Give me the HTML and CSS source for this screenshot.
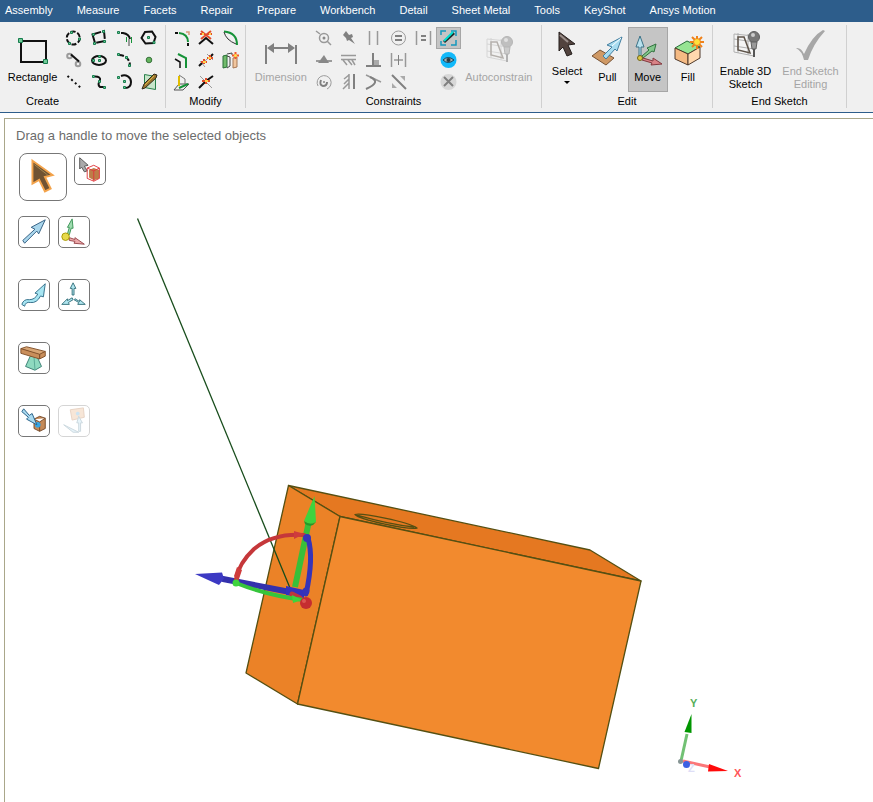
FILE: index.html
```html
<!DOCTYPE html>
<html lang="en">
<head>
<meta charset="utf-8">
<title>Sketch and Move</title>
<link rel="stylesheet" href="styles.css">
</head>
<body>
<nav class="tabs">
  <a href="#">Assembly</a><a href="#">Measure</a><a href="#">Facets</a><a href="#">Repair</a><a href="#">Prepare</a><a href="#">Workbench</a><a href="#">Detail</a><a href="#">Sheet Metal</a><a href="#">Tools</a><a href="#">KeyShot</a><a href="#">Ansys Motion</a>
</nav>
<header class="ribbon">
  <section class="group create">
    <div class="tools">
      <button class="big wide"><svg width="36" height="32" viewBox="0 0 36 32"><path class="k" d="M6 7h25v21H6z"/><path class="n" d="M3.500 4.500h4v4h-4zM28.500 25.500h4v4h-4z"/></svg>Rectangle</button>
      <div class="grid four">
        <button aria-label="Circle"><svg viewBox="0 0 25 22"><circle class="k" cx="12.300" cy="11" r="6.500" stroke-dasharray="5 1.800"/><path class="n" d="M9.500 4.500h2v2h-2zM17.500 11h2v2h-2zM7.500 15.500h2v2h-2z"/></svg></button>
        <button aria-label="Three-point rectangle"><svg viewBox="0 0 25 22"><path class="k" d="M6.500 7.500L18 4l1 10-10 2z" stroke-dasharray="9 2"/><path class="n" d="M6.500 6.500h2v2h-2zM16.500 3.500h2v2h-2zM7.500 15.500h2v2h-2zM17.500 13.500h2v2h-2z"/></svg></button>
        <button aria-label="Tangent arc"><svg viewBox="0 0 25 22"><path class="k" d="M10 6h2q6 1 7 6"/><path class="s thick" d="M18 12v7"/><path class="g" d="M15.500 10v5M20.500 10v6"/><path class="n" d="M6.500 4.500h2v2h-2z"/></svg></button>
        <button aria-label="Polygon"><svg viewBox="0 0 25 22"><path class="k" d="M9 5l7-.5L19.500 10l-2 6-8 .500L5.500 11z"/><path class="n" d="M11.500 9.500h2v2h-2zM17 14.500h2v2h-2z"/></svg></button>
        <button aria-label="Tangent line"><svg viewBox="0 0 25 22"><circle class="s thick" cx="8.500" cy="7" r="2.300"/><circle class="s thick" cx="17" cy="15" r="2.300"/><path class="k" d="M10 5.500l8 7"/></svg></button>
        <button aria-label="Ellipse"><svg viewBox="0 0 25 22"><ellipse class="k" cx="13" cy="11.500" rx="7" ry="4.500"/><path class="n" d="M6.500 10.500h2v2h-2zM12.500 10.500h2v2h-2zM12.500 6.500h2v2h-2z"/></svg></button>
        <button aria-label="Three-point arc"><svg viewBox="0 0 25 22"><path class="k" d="M8 6c6 0 11 4 11 11" stroke-dasharray="5 2"/><path class="n" d="M6.500 4.500h2v2h-2zM14.500 7.500h2v2h-2zM17.500 15.500h2v2h-2z"/></svg></button>
        <button aria-label="Point"><svg viewBox="0 0 25 22"><circle cx="13" cy="11" r="2.800" fill="#64b45d" stroke="#39723d"/></svg></button>
        <button aria-label="Construction line"><svg viewBox="0 0 25 22"><path class="k" d="M6.500 5l14 12.500" stroke-dasharray="2 3"/></svg></button>
        <button aria-label="Spline"><svg viewBox="0 0 25 22"><path class="k" d="M9 5.500q6 0 5 4-3 4 0 6.500h4"/><path class="n" d="M6.500 4.500h2v2h-2zM12.500 9.500h2v2h-2zM17.500 15.500h2v2h-2z"/></svg></button>
        <button aria-label="Sweep arc"><svg viewBox="0 0 25 22"><path class="k" d="M10 5c5-2 10 1 10 6 0 4-2 6-6 6"/><path class="n" d="M6.500 5.500h2v2h-2zM12.500 9.500h2v2h-2zM12.500 15.500h2v2h-2z"/></svg></button>
        <button aria-label="Face curve"><svg viewBox="0 0 25 22"><path d="M8.500 3.500l11 2v13l-11-2z" fill="#c7e5ca" stroke="#28804a"/><path d="M6 18l2-5L18 3l3 1-1 3L9 17z" fill="#9b762e" stroke="#332a1d"/><path d="M9 14l9-9" stroke="#d8b848"/></svg></button>
      </div>
    </div>
    <h2>Create</h2>
  </section>
  <section class="group modify">
    <div class="tools">
      <div class="grid three">
        <button aria-label="Rounded corner"><svg viewBox="0 0 24 22"><path class="k" d="M5 6h3M18 16v3"/><path class="g thick" d="M9 6q9 1 9 9"/><path d="M16 5h3v3" stroke="#d99a7b" fill="none" stroke-width="1.500"/></svg></button>
        <button aria-label="Trim away"><svg viewBox="0 0 24 22"><path class="k" d="M5 17l7-6 7 6"/><path class="r" d="M7 4l10 8M17 4L7 12M6 7h5M13 7h5"/><path class="y" d="M8 7h2M15 7h2"/></svg></button>
        <button aria-label="Offset curve"><svg viewBox="0 0 24 22"><path class="g thick" d="M6 4.500q13 1 13 13.500"/><path d="M6 5q2 8 12 12" stroke="#333" fill="none"/></svg></button>
        <button aria-label="Offset line"><svg viewBox="0 0 24 22"><path d="M5 10l5 3v6" stroke="#111" fill="none" stroke-width="1.500"/><path class="g thick" d="M8 5l8 4v10"/></svg></button>
        <button aria-label="Split curve"><svg viewBox="0 0 24 22"><path class="s" d="M5 17L19 5M6 12l5 6M13 5l6 6"/><path class="k" d="M5 17l3-3M16 8l3-3"/><path class="r" d="M7 13h6M10 10v5M13 9h6M16 6v5"/><path class="y" d="M9 13h3M14 9h3"/></svg></button>
        <button aria-label="Project to sketch"><svg viewBox="0 0 24 22"><path d="M5 7l4-1v12l-4 1z" fill="#72bb6c" stroke="#286e36"/><path d="M9 5l5-1v2M12 8v9l-3 2M9 7l3 1" fill="none" stroke="#444"/><path d="M15 9l4-1v10l-4 1z" fill="#f2c69e" stroke="#a67857"/><path d="M17.500 3v7M14 6.500h7" stroke="#f4572a" stroke-width="2"/><circle cx="17.500" cy="6.500" r="1.500" fill="#ffe54c"/></svg></button>
        <button aria-label="Project edge"><svg viewBox="0 0 24 22"><path d="M9 13l10 0-6 6H4z" fill="#eee" stroke="#555"/><path class="g thick" d="M9 17l9-4"/><path d="M9 5v10" fill="none" stroke="#e1bd00" stroke-width="2"/><path d="M9 4l6 4v5" fill="none" stroke="#777"/></svg></button>
        <button aria-label="Create corner"><svg viewBox="0 0 24 22"><path class="s" d="M6 5l12 12" stroke-width="2"/><path class="k" d="M5 17l7-7 7-5"/><path class="r" d="M8 10h8M12 7v6"/><path class="y" d="M11 10h3"/></svg></button>
      </div>
    </div>
    <h2>Modify</h2>
  </section>
  <section class="group constraints">
    <div class="tools">
      <button class="big wide off" disabled><svg width="36" height="32" viewBox="0 0 36 32"><path class="d thick" d="M3 11v19M33 11v19M8 14h20"/><path fill="#808080" d="M4 14l7-5v10zM32 14l-7-5v10z"/></svg>Dimension</button>
      <div class="grid six">
        <button aria-label="Coincident"><svg viewBox="0 0 25 22"><circle class="m" cx="13" cy="11" r="4.500"/><path class="m" d="M5 4l4 3M16 14l4 4"/><circle cx="13" cy="11" r="1.500" fill="#888"/></svg></button>
        <button aria-label="Fix"><svg viewBox="0 0 25 22"><path d="M7 8l3-4 3 4 3-1 1 3-2 1 4 6-6-4-2 1-1-3z" fill="#808080"/></svg></button>
        <button aria-label="Parallel"><svg viewBox="0 0 25 22"><path class="m" d="M8.500 4v14"/><path class="m" d="M16.500 4v14"/></svg></button>
        <button aria-label="Equal radius"><svg viewBox="0 0 25 22"><circle class="s" cx="12.500" cy="11" r="7"/><path class="d thick" d="M9 9h7M9 13h7"/></svg></button>
        <button aria-label="Equal distance"><svg viewBox="0 0 25 22"><path class="m" d="M5.500 4v14M19.500 4v14"/><path class="d thick" d="M10 9h5M10 13h5"/></svg></button>
        <button class="active" aria-label="Curve display"><svg viewBox="0 0 25 22"><path d="M5 8V4h5M15 4h5v5M5 14v4h5M15 18h5v-5" stroke="#1598bd" fill="none" stroke-width="1.500"/><path d="M8 15L18 6" stroke="#202b2c" stroke-width="3"/><path d="M8 14L17 5" stroke="#00e1d2" stroke-width="2"/></svg></button>
        <button aria-label="Midpoint"><svg viewBox="0 0 25 22"><path class="s thick" d="M5 12h4M16 12h5"/><path d="M7 14l6-8 5 8z" fill="#888"/></svg></button>
        <button aria-label="Horizontal"><svg viewBox="0 0 25 22"><path class="m" d="M5 6.500h15M5 10.500h15M7 11l4 5M12 11l4 5M16 11l3 5"/></svg></button>
        <button aria-label="Perpendicular"><svg viewBox="0 0 25 22"><path class="d thick" d="M5 17h15M12 4v12"/><path fill="#aaa" d="M13 11h5v5h-5z"/></svg></button>
        <button aria-label="Symmetric"><svg viewBox="0 0 25 22"><path class="m" d="M5.500 4v14M19.500 4v14M8 11h9"/><path class="d" d="M12.500 6v10"/></svg></button>
        <span></span>
        <button aria-label="Show constraints"><svg viewBox="0 0 25 22"><circle cx="12.500" cy="11" r="8" fill="#12b9fa"/><path d="M7 11q5-5 11 0-6 5-11 0" fill="#9fb0b5" stroke="#174358"/><circle cx="12.500" cy="11" r="2" fill="#293b41"/></svg></button>
        <button aria-label="Concentric"><svg viewBox="0 0 25 22"><path class="s" d="M7 15a7 7 0 1 1 9 3"/><path class="d thick" d="M10 9q-2 5 2 6 4 0 4-4"/><circle cx="13" cy="11" r="1" fill="#888"/></svg></button>
        <button aria-label="Vertical"><svg viewBox="0 0 25 22"><path class="m" d="M13 3v15M8 8l5-4M8 13l5-5M7 18l6-6"/><path class="d thick" d="M18 3v15"/></svg></button>
        <button aria-label="Tangent"><svg viewBox="0 0 25 22"><path class="m" d="M5 4l15 7"/><path class="d thick" d="M9 6q12 5-4 12"/></svg></button>
        <button aria-label="Equal length"><svg viewBox="0 0 25 22"><path class="d thick" d="M6 4l14 14"/><path fill="#aaa" d="M14 5h5v5zM6 12v5h5z"/></svg></button>
        <span></span>
        <button aria-label="Delete constraints"><svg viewBox="0 0 25 22"><circle cx="12.500" cy="11" r="8" fill="#d7d7d7"/><path class="d thick" d="M8 6l9 9M17 6l-9 9"/></svg></button>
      </div>
      <button class="big auto off" disabled><svg width="32" height="32" viewBox="0 0 32 32"><use href="#lamp" opacity=".4"/></svg>Autoconstrain</button>
    </div>
    <h2>Constraints</h2>
  </section>
  <section class="group edit">
    <div class="tools">
      <button class="big high"><svg width="32" height="32" viewBox="0 0 32 32"><path d="M8 3l16 12-7 1 4 9-5 2-4-9-4 4z" fill="#52433e" stroke="#241e1c"/><path d="M9 6l8 7" stroke="#9b8f8b" stroke-width="2"/></svg>Select<i class="caret"></i></button>
      <button class="big"><svg width="32" height="32" viewBox="0 0 32 32"><path d="M1 22l8-6 14 8-8 7z" fill="#cf9965" stroke="#765235"/><path d="M12 22l9-9-5-2L31 3l-5 14-2-2-9 10z" fill="#a8dcf0" stroke="#447fa0"/><path d="M21 12l9-8" stroke="#fff"/></svg>Pull</button>
      <button class="big active"><svg width="32" height="32" viewBox="0 0 32 32"><path d="M10 22l7-6-2-2 9-4-2 8-2-1-9 7z" fill="#83c68b" stroke="#31713e"/><path d="M7 23V13H4L8 2l4 11H9v10z" fill="#b9e1ee" stroke="#3c7287"/><path d="M11 24l10 3v-3l9 6-11 1 1-2-10-3z" fill="#d98286" stroke="#82383e"/><circle cx="8" cy="24" r="2.500" fill="#ddc845" stroke="#736719"/></svg>Move</button>
      <button class="big"><svg width="32" height="32" viewBox="0 0 32 32"><path d="M3 14l12-7 13 6-12 7z" fill="#96e493" stroke="#276c39"/><path d="M3 14l13 6v11L3 25z" fill="#f5ba83" stroke="#4f392b"/><path d="M16 20l12-7v11l-12 7z" fill="#ffd8ae" stroke="#4f392b"/><path d="M25 2v13M18 8h14M20 3l10 10M30 3L20 13" stroke="#ef811a" stroke-width="2"/><circle cx="25" cy="8" r="3.500" fill="#ffe13c" stroke="#ed811b"/></svg>Fill</button>
    </div>
    <h2>Edit</h2>
  </section>
  <section class="group finish">
    <div class="tools">
      <button class="big high wide"><svg width="32" height="32" viewBox="0 0 32 32"><defs><g id="lamp"><path d="M4 5l20 2v20L4 23z" fill="#f4f4f4" stroke="#b0b0b0"/><path d="M4 10l20 3M4 17l20 3M8 4v20M18 5v21" fill="none" stroke="#b0b0b0"/><path d="M8 8h6l6 16-12-3z" fill="none" stroke="#5d5349" stroke-width="1.500"/><circle cx="24" cy="8" r="5.500" fill="#777" stroke="#606060"/><path d="M21 13h6l-1 7h-4z" fill="#999" stroke="#606060"/><circle cx="23" cy="6" r="2" fill="#ccc"/><path d="M23 20v8h2v-8z" fill="#555"/></g></defs><use href="#lamp"/></svg>Enable 3D<br>Sketch</button>
      <button class="big high wide off" disabled><svg width="32" height="32" viewBox="0 0 32 32"><path d="M1 19q5-1 8 6Q17 7 28 1l2 1Q18 15 13 31H9Q7 22 1 19z" fill="#a7a7a7"/></svg>End Sketch<br>Editing</button>
    </div>
    <h2>End Sketch</h2>
  </section>
</header>
<main class="canvas">
  <svg class="scene" viewBox="5 119 868 683" preserveAspectRatio="xMinYMin meet" role="img" aria-label="Block with move handles">
    <g stroke="#554f12" stroke-width="1.300" stroke-linejoin="round">
      <path d="M288.500 485.500L590 550l51 31-301-64.500z" fill="#e57821"/>
      <path d="M288.500 485.500l51.500 31L297.500 704 246 673z" fill="#eb8227"/>
      <path d="M340 516.500L641 581l-42.500 187.500L297.500 704z" fill="#f28a2e"/>
      <path d="M355 514.500c6-2 53 7 62 13.500-8 2-57-8-62-13.500zM357 515c14 4 40 10 57 12" fill="none"/>
    </g>
    <path d="M137.500 218.500L290 588" stroke="#174c1b" stroke-width="1.300"/>
    <g fill="none" stroke-linecap="round">
      <path d="M223 579l67 13" stroke="#3431ad" stroke-width="6"/><path d="M195 574l27-1.500 2 6-5 6.500z" fill="#3c39c3"/><path d="M286 586l18 4v8l-18-3z" fill="#3431bd"/>
      <path d="M295 587l14-66" stroke="#39bf39" stroke-width="6" stroke-linecap="butt"/><path d="M314.500 496l1.500 26q-5 4-12-1z" fill="#3ed33e"/><path d="M304 521q6 5 12 1l-3 3q-4 2-8-1z" fill="#249a29"/>
      <path d="M236 579q3-16 18-30 19-16 50-14" stroke="#c5373a" stroke-width="4"/><path d="M234 576l3-9 5 3-4 12zM294 531l10 3-10 5z" fill="#cf3c3c"/>
      <path d="M308 538q6 20-2 56" stroke="#3634b8" stroke-width="5"/><circle cx="307" cy="538" r="4" fill="#3634b8"/><circle cx="306" cy="591" r="3.500" fill="#3634b8"/>
      <path d="M292 594l8 4" stroke="#bd353d" stroke-width="5"/><path d="M236 583q30 12 67 17" stroke="#36c53c" stroke-width="4"/><path d="M292 595l10 5-9 3z" fill="#3ed33e"/>
      <circle cx="236" cy="583" r="3.500" fill="#3ed33e"/><circle cx="306" cy="603" r="6" fill="#c52d30"/><circle cx="304" cy="601" r="2" fill="#dc5551"/>
    </g>
    <path d="M681 761l6-27" stroke="#72c174" stroke-width="3"/><path d="M691.500 714l-7 18 7 1z" fill="#009600"/><path d="M683 761l27 6" stroke="#fb7779" stroke-width="3"/><path d="M709 764l19 7-20 .500z" fill="#ff0a0a"/>
    <g class="axes"><text x="690" y="707" fill="#57af59">Y</text><text x="734" y="777" fill="#ff5558">X</text><text x="688" y="772" fill="#dedef6">Z</text></g>
    <circle cx="680.500" cy="761.500" r="2.500" fill="#869594"/><circle cx="686.500" cy="764.500" r="3.500" fill="#3d61e3"/>
  </svg>
  <div class="guides">
    <p>Drag a handle to move the selected objects</p>
    <div class="row first">
      <button class="guide large" aria-label="Select"><svg viewBox="0 0 48 48"><path d="M13 7l21 15-8 2 6 12-6 3-6-12-7 4z" fill="#705333" stroke="#f3a34b" stroke-width="2"/><path d="M15 11l14 11" stroke="#a68a51"/></svg></button>
      <button class="guide" aria-label="Select component"><svg viewBox="0 0 32 32"><path d="M5 4l9 8-4 1 3 5-3 1-3-5-2 2z" fill="#aaa" stroke="#555"/><path d="M15 17l5-2 6 2v9l-6 2-5-3z" fill="#bd7d48"/><path d="M13 15l7-3 6 3v11l-6 3-7-3zM13 15l7 3 6-3M20 18v11" stroke="#df383c" fill="none"/></svg></button>
    </div>
    <div class="row">
      <button class="guide" aria-label="Move direction"><svg viewBox="0 0 32 32"><path d="M4 25L17 13l-4-2L28 3l-7 15-2-3L6 28z" fill="#a9d6ec" stroke="#315d80"/></svg></button>
      <button class="guide" aria-label="Anchor"><svg viewBox="0 0 32 32"><path d="M9 18l2-7H9l5-9 1 10h-2l-2 7z" fill="#9fdcb0" stroke="#399354"/><path d="M11 22l6 2v-2l10 7-11-1 1-2-6-1z" fill="#eca9aa" stroke="#99474d"/><circle cx="7" cy="21" r="4" fill="#e7d94b" stroke="#a49600"/></svg></button>
    </div>
    <div class="row">
      <button class="guide" aria-label="Along trajectory"><svg viewBox="0 0 32 32"><path d="M3 26q2-6 8-5 6 0 9-6l-3-1L28 4l-2 14-3-1q-4 8-11 7-5-1-6 4z" fill="#a7e5f2" stroke="#316d89"/></svg></button>
      <button class="guide" aria-label="Radial move"><svg viewBox="0 0 32 32"><path d="M14 16V9h-2l3-6 3 6h-2v7zM14 19l-5 3v-2l-6 6 8 0-1-2 5-3zM17 20l5 3v-2l6 5-8 0 1-2-5-3z" fill="#b0e6f0" stroke="#35717c"/></svg></button>
    </div>
    <div class="row"><button class="guide" aria-label="Fulcrum"><svg viewBox="0 0 32 32"><path d="M12 14h7l5 11-7 4-10-4z" fill="#8ed9bf" stroke="#387d71"/><path d="M16 15l1 13" stroke="#57a794"/><path d="M2 6l6-2 20 5-6 4z" fill="#d8a574" stroke="#80502a"/><path d="M2 6l20 6v5L2 11zM22 12l6-3v5l-6 3z" fill="#c98e5b" stroke="#80502a"/></svg></button></div>
    <div class="row">
      <button class="guide" aria-label="Up to"><svg viewBox="0 0 32 32"><path d="M16 14l6-3 6 2v11l-6 3-6-3zM16 14l6 3 6-4M22 17v10" fill="#c58a58" stroke="#754928"/><circle cx="20" cy="20" r="3" fill="#35a4e3"/><path d="M5 3l6 7 3-2 5 12-11-6 2-2-7-6z" fill="#a9daf0" stroke="#245d85"/></svg></button>
      <button class="guide faded" aria-label="Orient" disabled><svg viewBox="0 0 32 32"><path d="M12 4l14-2 1 10-13 3z" fill="#e5ad7e" stroke="#b26e3c"/><path d="M21 27v-9h-2l2-7 4 7h-2v9zM21 28L5 20l10 8z" fill="#b2dbef" stroke="#557f93"/><circle cx="20" cy="8" r="2" fill="#58a6d5"/></svg></button>
    </div>
  </div>
</main>
</body>
</html>
```
FILE: styles.css
```css
* { box-sizing: border-box; }
body { margin: 0; min-height: 100vh; display: flex; flex-direction: column; background: #fff; font: 12px/13px "Liberation Sans", Arial, sans-serif; }
.tabs { display: flex; gap: 24px; height: 22px; padding: 0 5px; background: #2d5d8b; font-size: 11px; line-height: 21px; white-space: nowrap; }
.tabs a { color: #fff; text-decoration: none; }
.ribbon { display: flex; height: 91px; padding-top: 3px; background: #f0f0f0; border-bottom: 1px solid #2d5d8b; font-size: 11px; color: #000; overflow: hidden; }
.group { display: flex; flex-direction: column; height: 83px; border-right: 1px solid #d0d0d0; flex: none; }
.create { width: 166px; }
.modify { width: 80px; }
.constraints { width: 296px; }
.edit { width: 171px; }
.finish { width: 134px; }
.create h2 { padding-right: 80px; }
.tools { display: flex; flex: 1; align-items: flex-start; padding: 2px 4px 0; }
.constraints .tools { padding: 2px 4px 0 5px; }
.finish .tools { padding: 2px 0 0; }
.edit .tools { padding: 2px 4px 0 5px; }
h2 { margin: 0; height: 14px; font-size: 11px; font-weight: 400; line-height: 15px; text-align: center; }
button { appearance: none; padding: 0; margin: 0; border: 0; background: transparent; font: inherit; color: inherit; }
.grid { display: grid; grid-auto-rows: 22px; }
.grid button, .grid svg { display: block; width: 100%; height: 22px; }
.four { grid-template-columns: repeat(4, 25px); }
.three { grid-template-columns: repeat(3, 24px); }
.six { grid-template-columns: repeat(6, 25px); }
.big { display: flex; flex-direction: column; align-items: center; width: 41px; height: 65px; padding-top: 7px; text-align: center; white-space: nowrap; line-height: 15px; }
.big svg { flex: none; margin-bottom: 4px; }
.wide { width: 58px; }
.constraints .wide { width: 61px; }
.auto { width: 78px; }
.high { padding-top: 2px; line-height: 13px; }
.finish .wide { width: 65px; }
.off { color: #a5a5a5; }
.active { background: #c5c5c5; outline: 1px solid #a6a6a6; outline-offset: -1px; }
.caret { margin-top: 3px; border: 3px solid transparent; border-top-color: #000; border-bottom: 0; }
.k, .s, .d, .g, .r, .y, .m { fill: none; stroke-width: 2; }
.k { stroke: #111; }
.s { stroke: #9b9b9b; stroke-width: 1; }
.d { stroke: #808080; stroke-width: 1; }
.m { stroke: #999; stroke-width: 1.5; }
.g { stroke: #159238; stroke-width: 1; }
.r { stroke: #e24b2b; }
.y { stroke: #ffd44c; }
.n { fill: #70c997; stroke: #167c4d; }
.thick { stroke-width: 2; }
.canvas { position: relative; flex: 1; margin: 5px 0 0 4px; border-left: 1px solid #aaa78a; border-top: 1px solid #aaa78a; }
.scene { position: absolute; width: 100%; height: 100%; inset: 0; }
.axes { font: bold 11px "Liberation Sans", Arial, sans-serif; }
.guides { position: relative; display: flex; flex-direction: column; align-items: flex-start; gap: 31px; padding: 9px 13px; }
.guides p { margin: 0 -2px -22px; color: #6c6c6c; font-size: 13px; line-height: 16px; }
.row { display: flex; gap: 8px; height: 32px; }
.first { gap: 7px; height: 48px; margin: 0 1px -16px; }
.guide { width: 32px; height: 32px; border: 1px solid #777; border-radius: 5px; background: #fff; }
.guide svg { display: block; width: 100%; height: 100%; }
.large { width: 48px; height: 48px; border-radius: 8px; }
.faded { opacity: .3; }
```
